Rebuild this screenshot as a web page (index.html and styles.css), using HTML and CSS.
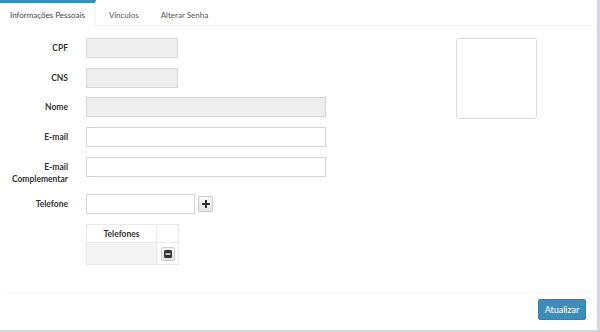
FILE: index.html
```html
<!DOCTYPE html>
<html lang="pt-BR">
<head>
    <meta charset="UTF-8">
    <meta name="viewport" content="width=device-width, initial-scale=1.0">
    <title>Perfil</title>
    <link rel="stylesheet" href="styles.css">
</head>
<body>
    <div class="tabs-box">
        <!-- Tabs -->
        <ul class="tab-nav">
            <li class="active">Informações Pessoais</li>
            <li>Vínculos</li>
            <li>Alterar Senha</li>
        </ul>

        <div class="tab-content">
            <div class="form-area">
                <div class="fields">
                    <div class="form-row">
                        <label>CPF</label>
                        <input type="text" class="input-sm" disabled>
                    </div>
                    <div class="form-row">
                        <label>CNS</label>
                        <input type="text" class="input-sm" disabled>
                    </div>
                    <div class="form-row">
                        <label>Nome</label>
                        <input type="text" class="input-lg" disabled>
                    </div>
                    <div class="form-row">
                        <label>E-mail</label>
                        <input type="text" class="input-lg">
                    </div>
                    <div class="form-row form-row-top">
                        <label>E-mail Complementar</label>
                        <input type="text" class="input-lg">
                    </div>
                    <div class="form-row phone-row">
                        <label>Telefone</label>
                        <input type="text" class="input-md">
                        <button class="btn-icon" type="button">
                            <svg width="8" height="8" viewBox="0 0 8 8"><path d="M3 0h2v3h3v2H5v3H3V5H0V3h3z" fill="#333"/></svg>
                        </button>
                    </div>
                    <div class="form-row">
                        <label></label>
                        <table class="phones">
                            <thead>
                                <tr><th>Telefones</th><th></th></tr>
                            </thead>
                            <tbody>
                                <tr>
                                    <td></td>
                                    <td class="action">
                                        <button class="btn-icon btn-tiny" type="button">
                                            <svg width="8" height="8" viewBox="0 0 8 8"><rect x="0" y="0" width="8" height="8" rx="1.5" fill="#333"/><rect x="1.5" y="3.3" width="5" height="1.4" fill="#fff"/></svg>
                                        </button>
                                    </td>
                                </tr>
                            </tbody>
                        </table>
                    </div>
                </div>
                <div class="photo"></div>
            </div>
        </div>

        <div class="box-footer">
            <button class="btn-primary" type="button">Atualizar</button>
        </div>
    </div>
</body>
</html>
```

FILE: styles.css
```css
* {
    margin: 0;
    padding: 0;
    box-sizing: border-box;
}

body {
    font-family: Lato, "Open Sans", sans-serif;
    font-size: 9px;
    background: #d2d6de;
    color: #333;
}

.tabs-box {
    width: 597px;
    height: 330px;
    background: #fff;
    display: flex;
    flex-direction: column;
}

.tab-nav {
    list-style: none;
    display: flex;
    height: 26px;
    border-bottom: 1px solid #f4f4f4;
    font-size: 8px;
}

.tab-nav li {
    padding: 0 11px;
    line-height: 24px;
    color: #555;
    border-top: 3px solid transparent;
}

.tab-nav li:first-child {
    padding: 0 10px;
}

.tab-nav li:nth-child(2) {
    padding: 0 11px 0 13px;
}

.tab-nav li.active {
    border-top-color: #3c8dbc;
    border-right: 1px solid #f4f4f4;
    height: 26px;
    margin-bottom: -1px;
    background: #fff;
    color: #444;
}

.tab-content {
    flex: 1;
    padding: 12px 0 0 0;
}

.form-area {
    display: flex;
}

.fields {
    width: 456px;
}

.form-row {
    display: flex;
    align-items: center;
    margin-bottom: 9.7px;
}

.form-row label {
    width: 68px;
    margin-right: 18px;
    text-align: right;
    font-weight: bold;
    font-size: 8.5px;
    line-height: 12px;
    color: #333;
}

.form-row-top {
    align-items: flex-start;
}

.form-row-top label {
    padding-left: 10px;
    margin-top: 4px;
}

input {
    height: 20px;
    border: 1px solid #d2d6de;
    background: #fff;
    font-family: inherit;
    font-size: 9px;
}

input:disabled {
    background: #eee;
}

.input-sm {
    width: 92px;
}

.input-md {
    width: 109px;
}

.input-lg {
    width: 240px;
}

.btn-icon {
    width: 15px;
    height: 16px;
    margin-left: 3px;
    border: 1px solid #ccc;
    border-radius: 2px;
    background: linear-gradient(#fafafa, #e2e2e2);
    display: flex;
    align-items: center;
    justify-content: center;
}

.btn-tiny {
    width: 14px;
    height: 14px;
    margin: 0 auto;
}

.phones {
    border-collapse: collapse;
}

.phones th,
.phones td {
    border: 1px solid #eaeaea;
}

.phones th {
    width: 70px;
    height: 18px;
    font-weight: bold;
    font-size: 8.5px;
    text-align: center;
}

.phones th:last-child {
    width: 22px;
}

.phones td {
    height: 22px;
    background: #f4f4f4;
}

.phones td.action {
    background: #fff;
}

.photo {
    width: 81px;
    height: 81px;
    border: 1px solid #ddd;
    border-radius: 3px;
}

.box-footer {
    margin: 0 2px 0 6px;
    border-top: 1px solid #f4f4f4;
    padding: 6px 9px 10px 0;
    display: flex;
    justify-content: flex-end;
}

.btn-primary {
    width: 48px;
    height: 21px;
    background: #3c8dbc;
    border: 1px solid #367fa9;
    border-radius: 2px;
    color: #fff;
    font-family: inherit;
    font-size: 9px;
}
```
